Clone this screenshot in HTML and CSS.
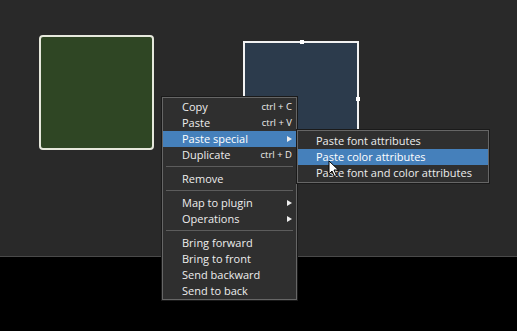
FILE: index.html
```html
<!DOCTYPE html>
<html>
<head>
    <title>Canvas context menu</title>
    <link rel="stylesheet" href="styles.css">
</head>
<body>
    <div class="stage">
        <!-- 画布上的两个方块 -->
        <div class="box box-green"></div>
        <div class="box box-blue">
            <span class="handle handle-top"></span>
            <span class="handle handle-right"></span>
        </div>

        <!-- 右键菜单 -->
        <ul class="menu main-menu">
            <li class="item">Copy<span class="key">ctrl + C</span></li>
            <li class="item">Paste<span class="key">ctrl + V</span></li>
            <li class="item active">Paste special<span class="arrow"></span></li>
            <li class="item">Duplicate<span class="key">ctrl + D</span></li>
            <li class="sep"></li>
            <li class="item">Remove</li>
            <li class="sep"></li>
            <li class="item">Map to plugin<span class="arrow"></span></li>
            <li class="item">Operations<span class="arrow"></span></li>
            <li class="sep"></li>
            <li class="item">Bring forward</li>
            <li class="item">Bring to front</li>
            <li class="item">Send backward</li>
            <li class="item">Send to back</li>
        </ul>

        <ul class="menu sub-menu">
            <li class="item">Paste font attributes</li>
            <li class="item active">Paste color attributes</li>
            <li class="item">Paste font and color attributes</li>
        </ul>

        <svg class="cursor" width="12" height="18" viewBox="0 0 12 18">
            <path d="M1 1 L1 14 L4 11 L6.5 16.5 L8.5 15.5 L6 10 L10.5 10 Z" fill="#fff" stroke="#000" stroke-width="1"/>
        </svg>
    </div>
    <div class="footer"></div>
</body>
</html>
```

FILE: styles.css
```css
body { margin: 0; background: #000; font-family: "Open Sans", "DejaVu Sans", sans-serif; }
.stage { position: relative; height: 256px; background: #292929; border-bottom: 1px solid #4a4a4a; }
.footer { height: 74px; background: #000; }

.box { position: absolute; box-sizing: border-box; }
.box-green { left: 39px; top: 35px; width: 115px; height: 115px; background: #2f4624; border: 2px solid #e6e8dc; border-radius: 4px; }
.box-blue { left: 243px; top: 41px; width: 116px; height: 116px; background: #2c3b4c; border: 2px solid #f2f2f2; }
.handle { position: absolute; width: 4px; height: 4px; background: #fff; }
.handle-top { left: 55px; top: -3px; }
.handle-right { right: -3px; top: 54px; }

.menu { position: absolute; margin: 0; padding: 1px 0 0; list-style: none; background: #2f2f2f; border: 1px solid #666; box-shadow: 0 0 0 1px #1a1a1a; color: #ededed; font-size: 11px; }
.main-menu { left: 162px; top: 97px; width: 133px; }
.sub-menu { left: 297px; top: 130px; width: 190px; padding: 2px 0 1px; }
.item { position: relative; height: 16px; line-height: 16px; padding-left: 19px; }
.sub-menu .item { padding-left: 18px; }
.item.active { background: #4580bb; color: #fff; }
.key { position: absolute; right: 4px; top: 0; font-size: 9.5px; }
.arrow { position: absolute; right: 4px; top: 5px; border-left: 5px solid #eee; border-top: 3px solid transparent; border-bottom: 3px solid transparent; }
.sep { height: 1px; margin: 3px 3px 4px; background: #5c5c5c; }

.cursor { position: absolute; left: 328px; top: 160px; }
```
